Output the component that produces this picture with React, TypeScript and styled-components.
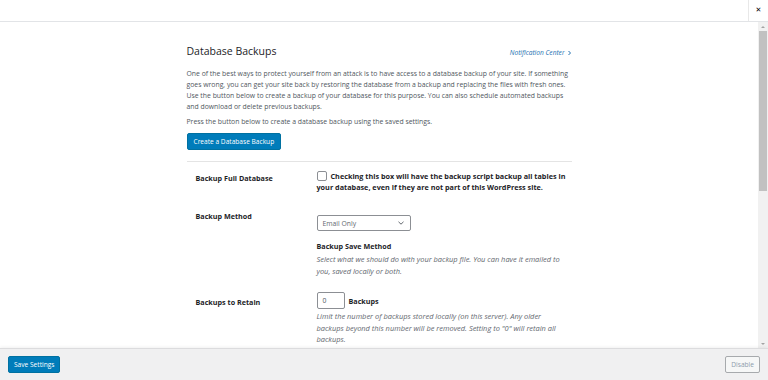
import styled, { createGlobalStyle } from 'styled-components'

const GlobalStyle = createGlobalStyle`
  html, body {
    margin: 0;
    padding: 0;
    background: #ffffff;
  }
  body {
    font-family: "Open Sans", "Noto Sans", sans-serif;
    color: #3c434a;
  }
`

type SettingRow = {
  label: string
}

const Page = styled.div`
  width: 768px;
  height: 380px;
  display: flex;
  flex-direction: column;
  overflow: hidden;
`

const TopBar = styled.header`
  height: 21px;
  flex: none;
  display: flex;
  justify-content: flex-end;
  border-bottom: 1px solid #e2e4e7;
`

const CloseButton = styled.button`
  width: 20px;
  height: 21px;
  border: 0;
  border-left: 1px solid #e8e8e8;
  background: #fff;
  padding: 0;
  display: flex;
  align-items: center;
  justify-content: center;
  color: #000;
  font-family: "DejaVu Sans", sans-serif;
  font-weight: bold;
  font-size: 7px;
  line-height: 1;
`

const Middle = styled.div`
  flex: 1;
  display: flex;
  min-height: 0;
`

const Scroller = styled.main`
  flex: 1;
  overflow: hidden;
  padding-top: 21px;
`

const Column = styled.div`
  width: 385px;
  margin: 0 auto;
`

const TitleRow = styled.div`
  display: flex;
  justify-content: space-between;
  align-items: baseline;
`

const Title = styled.h2`
  margin: 0;
  font-size: 10.5px;
  font-weight: 400;
  color: #1d2327;
  line-height: 16px;
`

const NotifyLink = styled.a`
  font-size: 6.6px;
  font-style: italic;
  color: #2271b1;
  text-decoration: none;
  display: flex;
  align-items: center;
  gap: 2px;
`

const Para = styled.p<{ $gap?: number }>`
  margin: ${(p) => p.$gap ?? 0}px 0 0;
  font-size: 6.85px;
  line-height: 11px;
  color: #50575e;
`

const PrimaryButton = styled.button`
  background: #007cba;
  border: 1px solid #0071a1;
  border-radius: 2px;
  color: #fff;
  font-family: inherit;
  font-size: 6.6px;
  height: 17px;
  padding: 0 6px;
  display: inline-flex;
  align-items: center;
`

const ButtonBar = styled.div`
  display: flex;
  margin-top: 6px;
`

const Divider = styled.hr`
  border: 0;
  border-top: 1px solid #e4e4e4;
  margin: 11px 0 0;
`

const Table = styled.div`
  display: flex;
  flex-direction: column;
  padding-top: 9px;
`

const Row = styled.div<{ $pad: number }>`
  display: grid;
  grid-template-columns: 121px 1fr;
  padding-left: 9px;
  padding-bottom: ${(p) => p.$pad}px;
`

const Label = styled.div<{ $top: number }>`
  font-size: 7.2px;
  font-weight: 700;
  color: #1d2327;
  padding-top: ${(p) => p.$top}px;
  line-height: 11px;
`

const Field = styled.div<{ $top: number }>`
  padding-right: 6px;
  padding-top: ${(p) => p.$top}px;
`

const CheckLine = styled.div`
  font-size: 7.25px;
  font-weight: 700;
  color: #1d2327;
  line-height: 11px;
`

const Checkbox = styled.span`
  display: inline-block;
  width: 8px;
  height: 8px;
  border: 1px solid #8c8f94;
  border-radius: 2px;
  vertical-align: -2px;
  margin-right: 4px;
  background: #fff;
`

const Select = styled.div`
  width: 94px;
  height: 16px;
  box-sizing: border-box;
  border: 1px solid #8c8f94;
  border-radius: 2px;
  display: flex;
  align-items: center;
  justify-content: space-between;
  padding: 0 6px 0 5px;
  font-size: 6.8px;
  color: #646970;
`

const SubHead = styled.div`
  margin-top: 10px;
  font-size: 7.2px;
  font-weight: 700;
  color: #1d2327;
  line-height: 11px;
`

const Hint = styled.p<{ $gap?: number }>`
  margin: ${(p) => p.$gap ?? 0}px 0 0;
  font-size: 7.45px;
  font-style: italic;
  color: #646970;
  line-height: 11.6px;
`

const InlineField = styled.div`
  display: flex;
  align-items: center;
  gap: 4px;
  font-size: 7.2px;
  font-weight: 700;
  color: #1d2327;
`

const NumberBox = styled.div`
  width: 28px;
  height: 17px;
  box-sizing: border-box;
  border: 1px solid #8c8f94;
  border-radius: 2px;
  font-size: 6.8px;
  font-weight: 400;
  color: #50575e;
  padding-left: 5px;
  display: flex;
  align-items: center;
`

const ScrollTrack = styled.div`
  width: 10px;
  flex: none;
  background: #f1f1f1;
  display: flex;
  flex-direction: column;
  align-items: center;
`

const ScrollArrow = styled.div<{ $down?: boolean }>`
  height: 9px;
  width: 10px;
  display: flex;
  align-items: center;
  justify-content: center;
  &::after {
    content: '';
    border-left: 2px solid transparent;
    border-right: 2px solid transparent;
    ${(p) => (p.$down ? 'border-top' : 'border-bottom')}: 2px solid #a3a3a3;
  }
`

const ScrollThumb = styled.div`
  width: 8px;
  height: 160px;
  background: #c1c1c1;
`

const Spacer = styled.div`
  flex: 1;
`

const Footer = styled.footer`
  height: 32px;
  flex: none;
  box-sizing: border-box;
  background: #f0f0f1;
  border-top: 1px solid #dcdcde;
  box-shadow: 0 -1px 3px rgba(0, 0, 0, 0.06);
  display: flex;
  align-items: center;
  justify-content: space-between;
  padding: 0 8px;
`

const SaveButton = styled(PrimaryButton)`
  font-size: 6.6px;
  padding: 0 5px;
`

const GhostButton = styled.button`
  height: 17px;
  padding: 0 5px;
  background: #f6f7f7;
  border: 1px solid #a7aaad;
  border-radius: 2px;
  font-family: inherit;
  font-size: 6.6px;
  color: #8c9bab;
`

const rows: SettingRow[] = [
  { label: 'Backup Full Database' },
  { label: 'Backup Method' },
  { label: 'Backups to Retain' },
]

export default function App() {
  return (
    <Page>
      <GlobalStyle />
      <TopBar>
        <CloseButton>✕</CloseButton>
      </TopBar>
      <Middle>
        <Scroller>
          <Column>
            <TitleRow>
              <Title>Database Backups</Title>
              <NotifyLink>
                Notification Center
                <svg width="5" height="6" viewBox="0 0 5 6">
                  <path d="M1.5 1 L3.5 3 L1.5 5" fill="none" stroke="#2271b1" strokeWidth="1" />
                </svg>
              </NotifyLink>
            </TitleRow>
            <Para $gap={9}>
              One of the best ways to protect yourself from an attack is to have access to a database backup of
              your site. If something goes wrong, you can get your site back by restoring the database from a
              backup and replacing the files with fresh ones. Use the button below to create a backup of your
              database for this purpose. You can also schedule automated backups and download or delete previous
              backups.
            </Para>
            <Para $gap={4}>Press the button below to create a database backup using the saved settings.</Para>
            <ButtonBar>
              <PrimaryButton>Create a Database Backup</PrimaryButton>
            </ButtonBar>
            <Divider />
            <Table>
              <Row $pad={18}>
                <Label $top={2}>{rows[0].label}</Label>
                <Field $top={0}>
                  <CheckLine>
                    <Checkbox />
                    Checking this box will have the backup script backup all tables in your database, even if
                    they are not part of this WordPress site.
                  </CheckLine>
                </Field>
              </Row>
              <Row $pad={15}>
                <Label $top={0}>{rows[1].label}</Label>
                <Field $top={4}>
                  <Select>
                    Email Only
                    <svg width="6" height="4" viewBox="0 0 6 4">
                      <path d="M0.5 0.8 L3 3.2 L5.5 0.8" fill="none" stroke="#50575e" strokeWidth="0.9" />
                    </svg>
                  </Select>
                  <SubHead>Backup Save Method</SubHead>
                  <Hint $gap={2}>
                    Select what we should do with your backup file. You can have it emailed to you, saved locally
                    or both.
                  </Hint>
                </Field>
              </Row>
              <Row $pad={10}>
                <Label $top={5}>{rows[2].label}</Label>
                <Field $top={0}>
                  <InlineField>
                    <NumberBox>0</NumberBox>
                    Backups
                  </InlineField>
                  <Hint $gap={2}>
                    Limit the number of backups stored locally (on this server). Any older backups beyond this
                    number will be removed. Setting to "0" will retain all backups.
                  </Hint>
                </Field>
              </Row>
            </Table>
          </Column>
        </Scroller>
        <ScrollTrack>
          <ScrollArrow />
          <ScrollThumb />
          <Spacer />
          <ScrollArrow $down />
        </ScrollTrack>
      </Middle>
      <Footer>
        <SaveButton>Save Settings</SaveButton>
        <GhostButton>Disable</GhostButton>
      </Footer>
    </Page>
  )
}
